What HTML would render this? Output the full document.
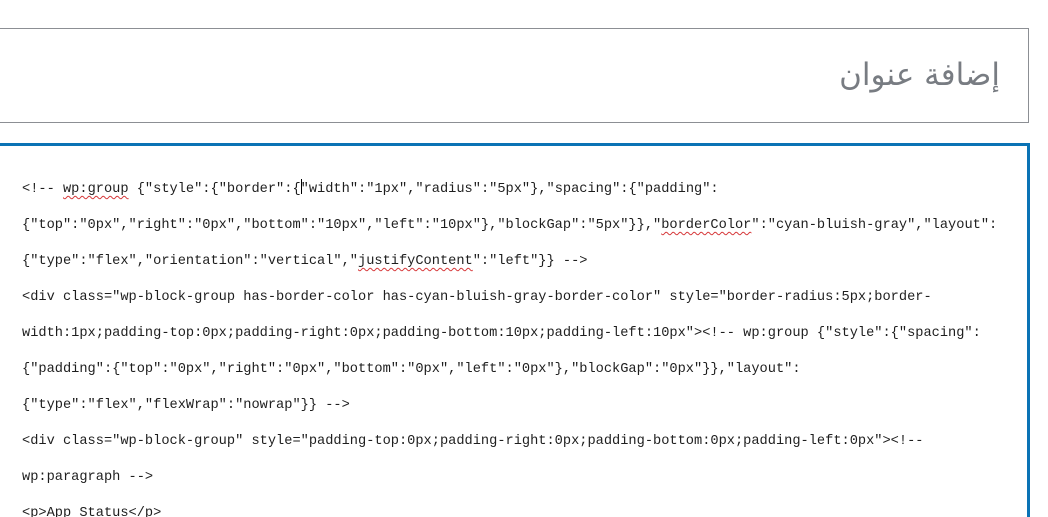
<!DOCTYPE html>
<html><head><meta charset="utf-8"><style>
html,body{margin:0;width:1048px;height:517px;overflow:hidden;background:#fff;position:relative;font-family:"Liberation Sans",sans-serif}
.title{position:absolute;left:-2px;top:28px;width:1031px;height:95px;border:1px solid #8c8f94;box-sizing:border-box}
.title span{position:absolute;right:28px;top:28px;font-size:31px;color:#787c82;font-family:"DejaVu Sans",sans-serif;direction:rtl;font-weight:300}
.code{position:absolute;left:-3px;top:143px;width:1033px;height:374px;border:3px solid #0a73b5;border-bottom:none;box-sizing:border-box}
.lines{position:absolute;left:22px;top:172px;height:345px;overflow:hidden;font-family:"Liberation Mono",monospace;font-size:13.67px;color:#1e1e1e;white-space:pre;line-height:36px}
.sq{text-decoration:underline wavy #d63638;text-decoration-thickness:1px;text-underline-offset:3px}
.cur{display:inline-block;width:1px;height:15px;background:#000;vertical-align:-2px;margin-right:-1px}
</style></head><body>
<div class="title"><span>إضافة عنوان</span></div>
<div class="code"></div>
<div class="lines">&lt;!-- <span class="sq">wp:group</span> {"style":{"border":{<span class="cur"></span>"width":"1px","radius":"5px"},"spacing":{"padding":
{"top":"0px","right":"0px","bottom":"10px","left":"10px"},"blockGap":"5px"}},"<span class="sq">borderColor</span>":"cyan-bluish-gray","layout":
{"type":"flex","orientation":"vertical","<span class="sq">justifyContent</span>":"left"}} --&gt;
&lt;div class="wp-block-group has-border-color has-cyan-bluish-gray-border-color" style="border-radius:5px;border-
width:1px;padding-top:0px;padding-right:0px;padding-bottom:10px;padding-left:10px"&gt;&lt;!-- wp:group {"style":{"spacing":
{"padding":{"top":"0px","right":"0px","bottom":"0px","left":"0px"},"blockGap":"0px"}},"layout":
{"type":"flex","flexWrap":"nowrap"}} --&gt;
&lt;div class="wp-block-group" style="padding-top:0px;padding-right:0px;padding-bottom:0px;padding-left:0px"&gt;&lt;!--
wp:paragraph --&gt;
&lt;p&gt;App Status&lt;/p&gt;</div>
</body></html>
